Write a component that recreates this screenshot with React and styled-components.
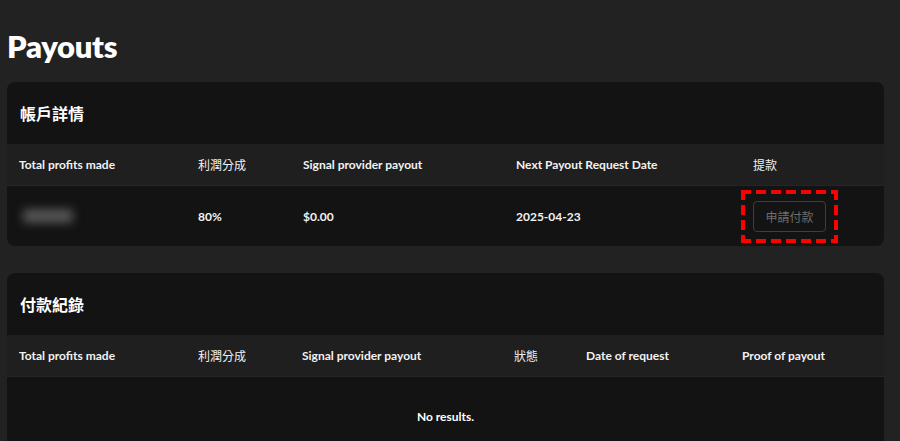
import React from "react";
import styled, { createGlobalStyle } from "styled-components";

const GlobalStyle = createGlobalStyle`
  html, body {
    margin: 0;
    padding: 0;
    background: #222222;
  }
  body {
    font-family: "Lato", "Noto Sans CJK TC", sans-serif;
    color: #ffffff;
  }
`;

const Page = styled.div`
  padding: 26px 16px 0 7px;
  height: 441px;
  box-sizing: border-box;
  overflow: hidden;
`;

const Title = styled.h1`
  margin: 0 0 16px;
  height: 40px;
  line-height: 40px;
  font-size: 31px;
  font-weight: 800;
  letter-spacing: -0.3px;
`;

const Card = styled.section`
  background: #131313;
  border-radius: 8px;
  overflow: hidden;
  margin-bottom: 27px;
`;

const CardHeader = styled.h2`
  margin: 0;
  height: 62px;
  display: flex;
  align-items: center;
  padding: 0 13px;
  font-size: 16px;
  font-weight: 700;
  font-family: "Noto Sans CJK TC", "Lato", sans-serif;
`;

const Row = styled.div`
  display: grid;
  grid-template-columns: ${(p) => p.$cols};
  align-items: center;
  height: ${(p) => p.$h}px;
  background: ${(p) => (p.$head ? "#1f1f1f" : "transparent")};
  border-bottom: ${(p) => (p.$head ? "1px solid #262626" : "none")};
  box-sizing: border-box;
`;

const Cell = styled.div`
  padding: 0 12px;
  font-size: 12px;
  font-weight: ${(p) => (p.$cjk ? 400 : 700)};
  font-family: ${(p) =>
    p.$cjk ? '"Noto Sans CJK TC", sans-serif' : '"Lato", "Noto Sans CJK TC", sans-serif'};
  white-space: nowrap;
  color: #f2f2f2;
`;

const Blurred = styled.div`
  width: 50px;
  height: 14px;
  margin-left: 4px;
  background: #555555;
  border-radius: 4px;
  filter: blur(5px);
`;

const Highlight = styled.div`
  display: inline-block;
  padding: 11px 12px;
  background:
    repeating-linear-gradient(90deg, #ff0000 0 10px, transparent 10px 15px) top left / 100% 4px no-repeat,
    repeating-linear-gradient(90deg, #ff0000 0 10px, transparent 10px 15px) bottom left / 100% 4px no-repeat,
    repeating-linear-gradient(180deg, #ff0000 0 10px, transparent 10px 15px) top left / 4px 100% no-repeat,
    repeating-linear-gradient(180deg, #ff0000 0 10px, transparent 10px 15px) top right / 4px 100% no-repeat;
`;

const RequestButton = styled.button`
  width: 73px;
  height: 31px;
  background: #141414;
  border: 1px solid #553723;
  border-radius: 4px;
  color: #6e6e6e;
  font-size: 12px;
  font-family: "Noto Sans CJK TC", sans-serif;
  cursor: not-allowed;
  display: block;
`;

const Empty = styled.div`
  height: 78px;
  display: flex;
  align-items: center;
  justify-content: center;
  font-size: 12px;
  font-weight: 700;
`;

const accountCols = "179px 105px 213px 237px 1fr";
const historyCols = "179px 104px 212px 72px 156px 1fr";

export default function App() {
  return (
    <>
      <GlobalStyle />
      <Page>
        <Title>Payouts</Title>
        <Card>
          <CardHeader>帳戶詳情</CardHeader>
          <Row $cols={accountCols} $h={42} $head>
            <Cell>Total profits made</Cell>
            <Cell $cjk>利潤分成</Cell>
            <Cell>Signal provider payout</Cell>
            <Cell>Next Payout Request Date</Cell>
            <Cell $cjk>提款</Cell>
          </Row>
          <Row $cols={accountCols} $h={60}>
            <Cell>
              <Blurred />
            </Cell>
            <Cell>80%</Cell>
            <Cell>$0.00</Cell>
            <Cell>2025-04-23</Cell>
            <div>
              <Highlight>
                <RequestButton disabled>申請付款</RequestButton>
              </Highlight>
            </div>
          </Row>
        </Card>
        <Card>
          <CardHeader>付款紀錄</CardHeader>
          <Row $cols={historyCols} $h={42} $head>
            <Cell>Total profits made</Cell>
            <Cell $cjk>利潤分成</Cell>
            <Cell>Signal provider payout</Cell>
            <Cell $cjk>狀態</Cell>
            <Cell>Date of request</Cell>
            <Cell>Proof of payout</Cell>
          </Row>
          <Empty>No results.</Empty>
        </Card>
      </Page>
    </>
  );
}
